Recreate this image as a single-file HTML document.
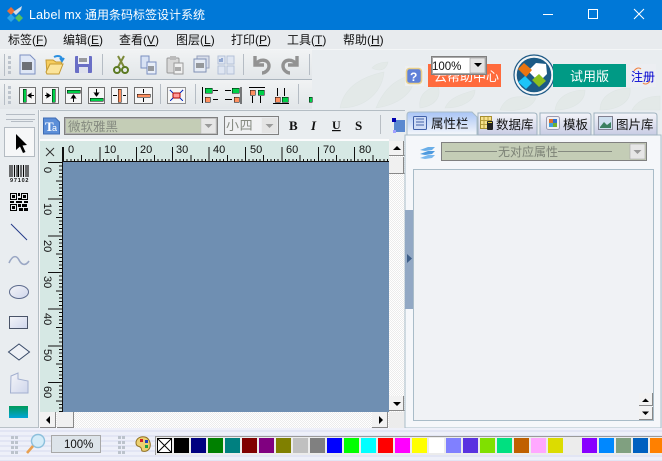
<!DOCTYPE html>
<html><head><meta charset="utf-8"><style>
html,body{margin:0;padding:0;background:#e9edf0;overflow:hidden}
svg{display:block}
text{font-family:"Liberation Sans","Noto Sans CJK SC",sans-serif;font-size:12px;fill:#111}
.c{font-family:"Noto Sans CJK SC","Liberation Sans",sans-serif}
.b{fill:#f6f6f6;stroke:#707070;stroke-width:1}
</style></head><body>
<svg width="662" height="461" viewBox="0 0 662 461" xmlns="http://www.w3.org/2000/svg">
<defs>
<linearGradient id="tb" x1="0" y1="0" x2="0" y2="1"><stop offset="0" stop-color="#f1f3f4"/><stop offset="1" stop-color="#e2e6e9"/></linearGradient>
<linearGradient id="tabA" x1="0" y1="0" x2="0" y2="1"><stop offset="0" stop-color="#a9c5f5"/><stop offset="1" stop-color="#f5f7fb"/></linearGradient>
<linearGradient id="tabB" x1="0" y1="0" x2="0" y2="1"><stop offset="0" stop-color="#f4f5fa"/><stop offset="1" stop-color="#c8cce4"/></linearGradient>
<linearGradient id="gr" x1="0" y1="0" x2="0" y2="1"><stop offset="0" stop-color="#009a5a"/><stop offset="1" stop-color="#00a5d8"/></linearGradient>
<linearGradient id="shp" x1="0" y1="0" x2="1" y2="1"><stop offset="0" stop-color="#f4f5f8"/><stop offset="1" stop-color="#cfd6ec"/></linearGradient>
<pattern id="stripe" patternUnits="userSpaceOnUse" width="4" height="5"><rect width="4" height="5" fill="#eef0f9"/><rect y="0" width="4" height="2" fill="#e2e5f4"/></pattern>
<pattern id="dith" patternUnits="userSpaceOnUse" width="2" height="2"><rect width="2" height="2" fill="#fff"/><rect width="1" height="1" fill="#ececec"/><rect x="1" y="1" width="1" height="1" fill="#ececec"/></pattern>
<g id="ht"><path shape-rendering="crispEdges" stroke="#111" fill="none" d="M0.5 -15V0M4 -3V0M7.8 -3V0M11.4 -3V0M15 -3V0M18.7 -7V0M22.3 -3V0M26 -3V0M29.6 -3V0M33.2 -3V0"/></g>
<g id="vt"><path shape-rendering="crispEdges" stroke="#111" fill="none" d="M-15 0.5H0M-4 4H0M-4 7.8H0M-4 11.4H0M-4 15H0M-7 18.8H0M-4 22.4H0M-4 26H0M-4 29.6H0M-4 33.3H0"/></g>
<clipPath id="hc"><rect x="63" y="141" width="326" height="22"/></clipPath>
<clipPath id="vc"><rect x="40" y="162" width="23" height="250"/></clipPath>
<g id="grip"><path fill="#bcc3cc" d="M0 0h3v3h-3zM0 5h3v3h-3zM0 10h3v3h-3zM0 15h3v3h-3z"/></g>
</defs>

<!-- base -->
<rect width="662" height="461" fill="#e9edf0"/>

<!-- leaf texture -->
<g fill="#e3e9e8" stroke="#dee5e4" stroke-width=".6">
<path d="M340 108c4-22 24-32 44-36-2 20-18 36-44 36z"/>
<path d="M376 108c10-24 24-30 38-34 2 16-12 30-38 34z"/>
<path d="M420 108c-2-14 8-20 18-22 4 12-4 20-18 22z"/>
<path d="M445 108c4-10 16-14 30-18 0 10-12 18-30 18z"/>
<path d="M500 110c6-16 20-14 36-12-4 10-16 14-36 12z"/>
<path d="M555 110c2-14 16-20 30-20 0 12-12 20-30 20z"/>
<path d="M600 110c0-14 14-22 30-22 2 14-12 22-30 22z"/>
<path d="M632 110c4-8 14-14 28-14v14z"/>
<path d="M372 68c3-4 10-6 16-6-2 8-8 10-16 6z"/>
</g>

<!-- title bar -->
<rect width="662" height="30" fill="#0078d7"/>
<g>
<path d="M11 7l4 4-4 4-4-4z" fill="#e8703a"/><path d="M11 14l4 4-4 4-4-4z" fill="#2aa4e8"/>
<path d="M19 14l4 4-4 4-4-4z" fill="#55c060"/><path d="M13 12l9-6 -1 4-5 5z" fill="#d5dde8"/>
</g>
<text x="29" y="19" style="fill:#fff;font-size:12.5px;letter-spacing:.2px">Label mx</text>
<text x="85" y="19" class="c" style="fill:#fff;font-size:12px">通用条码标签设计系统</text>
<g stroke="#fff" fill="none" shape-rendering="crispEdges">
<path d="M543 14.5h10"/><rect x="588.5" y="9.5" width="9" height="9"/>
</g>
<path d="M634 9l10 10M644 9l-10 10" stroke="#fff" fill="none"/>

<!-- menu -->
<rect y="30" width="662" height="20" fill="#e8ebee"/>
<rect y="49" width="662" height="1" fill="#f4f6f7"/>
<g class="c">
<text x="8" y="44">标签(<tspan text-decoration="underline">F</tspan>)</text>
<text x="63" y="44">编辑(<tspan text-decoration="underline">E</tspan>)</text>
<text x="119" y="44">查看(<tspan text-decoration="underline">V</tspan>)</text>
<text x="176" y="44">图层(<tspan text-decoration="underline">L</tspan>)</text>
<text x="231" y="44">打印(<tspan text-decoration="underline">P</tspan>)</text>
<text x="287" y="44">工具(<tspan text-decoration="underline">T</tspan>)</text>
<text x="343" y="44">帮助(<tspan text-decoration="underline">H</tspan>)</text>
</g>

<!-- toolbar rows -->
<rect y="50" width="312" height="29" fill="url(#tb)"/>
<rect y="79" width="312" height="1" fill="#aab4bd"/>
<rect y="80" width="312" height="29" fill="url(#tb)"/>
<use href="#grip" x="8" y="56"/><use href="#grip" x="8" y="86"/>
<g fill="#b5bcc4" shape-rendering="crispEdges">
<rect x="4" y="54" width="1" height="22"/><rect x="102" y="54" width="1" height="21"/><rect x="243" y="54" width="1" height="21"/><rect x="309" y="54" width="1" height="21"/>
<rect x="4" y="84" width="1" height="21"/><rect x="160" y="84" width="1" height="20"/><rect x="195" y="84" width="1" height="20"/><rect x="298" y="84" width="1" height="20"/>
</g>

<!-- row 1 icons -->
<path d="M20 55h10l5 5v14H20z" fill="#dfe7f6" stroke="#7d90c2"/><path d="M23 62v8M25 62v8M27 62v8M29 62v8M31 62v8" stroke="#222" stroke-width="1.2"/>
<path d="M46 60h7l3 2h6l-4 12H47z" fill="#f6cd5e" stroke="#c59a32"/><path d="M46 72l4-8h13l-4 10H47z" fill="#fbe49a" stroke="#c59a32"/><path d="M54 57c4-2 8-1 8 3M60 58l2 3 2-3" stroke="#2a8fe0" stroke-width="2" fill="none"/>
<rect x="75" y="56" width="17" height="17" rx="1" fill="#6a6fc6"/><rect x="78" y="56" width="11" height="8" fill="#eef0f6"/><rect x="79" y="67" width="9" height="6" fill="#dfe2ee"/><path d="M80 58v4M82 58v4M84 58v4M86 58v4" stroke="#444"/>
<path d="M118 56l6 11M124 56l-6 11" stroke="#7c8a3a" stroke-width="2"/><circle cx="117" cy="70" r="3" fill="none" stroke="#5b7a22" stroke-width="2"/><circle cx="125" cy="70" r="3" fill="none" stroke="#5b7a22" stroke-width="2"/>
<path d="M141 56h8v12h-8z" fill="#d8e2f4" stroke="#7a8fc0"/><path d="M147 62h9v12h-9z" fill="#e8eef8" stroke="#7a8fc0"/><path d="M149 66v5M151 66v5M153 66v5" stroke="#444"/>
<rect x="167" y="58" width="12" height="15" rx="1" fill="#d8d8d8" stroke="#999"/><rect x="170" y="56" width="6" height="4" fill="#bbb"/><path d="M174 63h9v11h-9z" fill="#f0f0f0" stroke="#999"/><path d="M176 67v4M178 67v4M180 67v4" stroke="#666"/>
<path d="M197 56h12v12h-12z" fill="#d8deea" stroke="#99a3bd"/><path d="M194 59h12v13h-12z" fill="#e6ebf4" stroke="#8090b4"/><path d="M197 63v5M199 63v5M201 63v5M203 63v5" stroke="#444"/>
<g fill="#dfe6f2" stroke="#b4c1d8"><rect x="218" y="56" width="7" height="8"/><rect x="227" y="56" width="7" height="8"/><rect x="218" y="66" width="7" height="8"/><rect x="227" y="66" width="7" height="8"/></g><path d="M220 59v3M222 58v4" stroke="#446ab0"/>
<path d="M255 56v9h9M255 65c4-7 14-6 14 1 0 4-4 7-7 7" stroke="#929292" stroke-width="3.4" fill="none"/>
<path d="M297 56v9h-9M297 65c-4-7-14-6-14 1 0 4 4 7 7 7" stroke="#929292" stroke-width="3.4" fill="none"/>

<!-- row 2 align icons -->
<g shape-rendering="crispEdges">
<rect class="b" x="19.5" y="87.5" width="16" height="16"/><rect x="23" y="89" width="3" height="13" fill="#00d048" stroke="#000" stroke-width=".5"/><path d="M28 95.5h6M28 95.5l3-2v4z" stroke="#000" fill="#000"/>
<rect class="b" x="42.5" y="87.5" width="16" height="16"/><rect x="52" y="89" width="3" height="13" fill="#00d048" stroke="#000" stroke-width=".5"/><path d="M45 95.5h6M50 95.5l-3-2v4z" stroke="#000" fill="#000"/>
<rect class="b" x="65.5" y="87.5" width="16" height="16"/><rect x="67" y="90" width="13" height="3" fill="#00d048" stroke="#000" stroke-width=".5"/><path d="M73.5 95v7M73.5 95l-2 3h4z" stroke="#000" fill="#000"/>
<rect class="b" x="88.5" y="87.5" width="16" height="16"/><rect x="90" y="98" width="13" height="3" fill="#00d048" stroke="#000" stroke-width=".5"/><path d="M96.5 89v7M96.5 96l-2-3h4z" stroke="#000" fill="#000"/>
<rect class="b" x="111.5" y="87.5" width="16" height="16"/><rect x="118" y="89" width="3" height="13" fill="#ff9060" stroke="#000" stroke-width=".5"/><path d="M113 95.5h4M123 95.5h3" stroke="#000"/>
<rect class="b" x="134.5" y="87.5" width="18" height="16"/><rect x="137" y="94" width="13" height="3" fill="#ff9060" stroke="#000" stroke-width=".5"/><path d="M143.5 89v4M143.5 98v4" stroke="#000"/>
<rect x="167.5" y="87.5" width="18" height="16" fill="#f6f6f6" stroke="#333" stroke-dasharray="1 1"/><rect x="173" y="93" width="7" height="5" fill="#ff9a9a" stroke="#a00"/><path d="M170 90l3 3M183 90l-3 3M170 101l3-3M183 101l-3-3" stroke="#1030c0" stroke-width="1.4"/>
<path d="M202.5 87v16" stroke="#000"/><rect x="205" y="88" width="7" height="5" fill="#00d048" stroke="#000" stroke-width=".5"/><rect x="205" y="97" width="5" height="5" fill="#ff9060" stroke="#000" stroke-width=".5"/><path d="M213 90.5h5M213 99.5h5" stroke="#000"/>
<rect x="232" y="88" width="7" height="5" fill="#00d048" stroke="#000" stroke-width=".5"/><rect x="234" y="97" width="5" height="5" fill="#ff9060" stroke="#000" stroke-width=".5"/><path d="M225 90.5h6M225 99.5h7M241 87v17" stroke="#000"/>
<path d="M249 87.5h16" stroke="#000"/><rect x="250" y="90" width="5" height="5" fill="#ff9060" stroke="#000" stroke-width=".5"/><rect x="258" y="90" width="6" height="5" fill="#00d048" stroke="#000" stroke-width=".5"/><path d="M252.5 96v7M260.5 96v7" stroke="#000"/>
<path d="M273 103.5h16" stroke="#000"/><rect x="275" y="97" width="5" height="5" fill="#ff9060" stroke="#000" stroke-width=".5"/><rect x="282" y="97" width="6" height="5" fill="#00d048" stroke="#000" stroke-width=".5"/><path d="M277.5 88v8M284.5 88v8" stroke="#000"/>
<rect x="309" y="97" width="3" height="5" fill="#00d048" stroke="#000" stroke-width=".5"/>
</g>

<!-- right toolbar controls -->
<rect x="405" y="66" width="19" height="20" fill="#eef0f1"/>
<rect x="406.5" y="68.5" width="15" height="15" rx="3" fill="#5f80d8" stroke="#e8cf8a" stroke-width="1.6"/>
<text x="410" y="81" style="fill:#fff;font-size:12px;font-weight:bold">?</text>
<rect x="428" y="64" width="73" height="23" fill="#ff6b3d"/>
<text x="434" y="81" class="c" style="fill:#fff;font-size:13px">云帮助中心</text>
<rect x="431" y="56" width="56" height="19" fill="#fff"/>
<rect x="431.5" y="56.5" width="55" height="18" fill="none" stroke="#808080" stroke-width="1"/>
<rect x="432.5" y="57.5" width="53" height="16" fill="none" stroke="#aaa" stroke-width="1"/>
<text x="432" y="70" style="font-size:11.5px">100%</text>
<rect x="470" y="58" width="15" height="15" fill="#e4e4e4" stroke="#999" stroke-width=".6"/>
<path d="M474 63h8l-4 4z" fill="#000"/>
<circle cx="534" cy="75" r="20" fill="#f2f5f7" stroke="#1e5a86" stroke-width="1.2"/>
<circle cx="534" cy="75" r="17.3" fill="#1c5a85"/>
<path d="M528 71l8-8 10 1 1 10-8 8z" fill="#fff"/>
<path d="M524 64l8 7-6 7-8-8z" fill="#ea7410" transform="translate(0,-1)"/>
<path d="M525 76l7 7-6 6-8-7z" fill="#1cc4f8"/>
<path d="M538 77l7 7-7 6-7-7z" fill="#8cc01e" transform="translate(1,-3)"/>
<rect x="553" y="64" width="73" height="23" fill="#009a85"/>
<text x="570" y="81" class="c" style="fill:#fff;font-size:13px">试用版</text>
<rect x="630" y="64" width="26" height="23" fill="#eceef2"/>
<text x="631" y="81" class="c" style="fill:#0000d0;font-size:12px">注册</text>
<path d="M634 71c2-3 5-4 7-2M643 83c2 2 5 1 7-2" stroke="#f08040" fill="none"/>

<!-- left tool panel -->
<rect y="110" width="38" height="318" fill="#e9edf0"/>
<rect x="0" y="427" width="38" height="1" fill="#b9c2c8"/>
<rect x="38" y="110" width="1" height="318" fill="#b4bdc4"/>
<rect x="39" y="110" width="1" height="318" fill="#f6f7f8"/>
<path d="M6 114.5h29M6 119.5h29M11 121.5h22" stroke="#b5bcc4" fill="none" shape-rendering="crispEdges"/>
<rect x="4.5" y="127.5" width="30" height="29" fill="#f6f7f8" stroke="#b4bbc2"/>
<path d="M16 134v16l4-3.500 3 6.500 2.500-1-3-6.500 4.500-.5z" fill="#000"/>
<path d="M10 165v12M12 165v12M14.500 165v12M17 165v12M18.500 165v12M21 165v12M23.500 165v12M26 165v12M28 165v12" stroke="#000" stroke-width="1.1"/>
<text x="10" y="182" style="font-size:5.5px;font-weight:bold;letter-spacing:.8px">97102</text>
<g fill="#000" shape-rendering="crispEdges">
<path fill-rule="evenodd" d="M10 193h7v7h-7zM11 194v5h5v-5zM12 195h3v3h-3z"/>
<path fill-rule="evenodd" d="M21 193h7v7h-7zM22 194v5h5v-5zM23 195h3v3h-3z"/>
<path fill-rule="evenodd" d="M10 204h7v7h-7zM11 205v5h5v-5zM12 206h3v3h-3z"/>
<path d="M18 193h2v3h-2zM18 198h3v2h-3zM10 201h4v2h-4zM16 201h6v2h-6zM24 201h4v2h-4zM18 204h3v3h-3zM22 204h5v3h-5zM19 208h4v3h-4zM24 208h4v3h-4z"/>
</g>
<path d="M11 224l16 16" stroke="#223a88" fill="none"/>
<path d="M9 263c4-9 8-7 10-3s6 7 10 1" stroke="#9aa7c4" stroke-width="1.6" fill="none"/>
<ellipse cx="19" cy="292" rx="9.500" ry="6.500" fill="url(#shp)" stroke="#5c6a8c"/>
<rect x="9.500" y="316.500" width="18" height="12" fill="url(#shp)" stroke="#4a5468"/>
<path d="M19 344l10.500 8-10.500 8-10.500-8z" fill="#eef1f6" stroke="#384a68"/>
<path d="M11 376l7-3v6l10 2v12H10.500z" fill="url(#shp)" stroke="#a2afcf"/>
<rect x="9" y="406" width="19" height="12" fill="url(#gr)"/>

<!-- font toolbar -->
<rect x="40" y="110" width="365" height="1" fill="#b4bdc4"/>
<rect x="40" y="111" width="365" height="28" fill="#e9edf0"/>
<rect x="40" y="139" width="349" height="2" fill="#fbfbfc"/>
<path d="M43.500 118h12l4 4v12h-16z" fill="#5b8ed8" stroke="#3e6cb4"/>
<text x="45" y="131" style="fill:#fff;font-family:'Liberation Serif',serif;font-size:13px;font-weight:bold">T</text>
<text x="52" y="131" style="fill:#fff;font-size:9px">a</text>
<rect x="64.500" y="117.500" width="153" height="17" fill="#c4cdb6" stroke="#808080"/>
<rect x="65.500" y="118.500" width="151" height="15" fill="none" stroke="#b0b0b0"/>
<text x="68" y="131" class="c" style="fill:#858a80;font-size:12.500px">微软雅黑</text>
<rect x="201" y="118.500" width="15" height="15" fill="#e6e6e6" stroke="#bbb" stroke-width=".5"/>
<path d="M204.500 124h8l-4 4z" fill="#9b9b9b"/>
<rect x="224.500" y="116.500" width="54" height="18" fill="#e9ebee" stroke="#808080"/>
<rect x="225.500" y="117.500" width="36" height="16" fill="#f0f1f3"/>
<text x="226" y="130" class="c" style="fill:#858a80;font-size:13px;letter-spacing:.6px">小四</text>
<rect x="262" y="118" width="15" height="15" fill="#e4e4e4"/>
<path d="M265.500 124h8l-4 4z" fill="#9b9b9b"/>
<text x="289" y="130" style="font-family:'Liberation Serif',serif;font-weight:bold;font-size:13px">B</text>
<text x="311" y="130" style="font-family:'Liberation Serif',serif;font-weight:bold;font-style:italic;font-size:13px">I</text>
<text x="332" y="129" style="font-family:'Liberation Serif',serif;font-weight:bold;font-size:12px;text-decoration:underline">U</text>
<text x="355" y="130" style="font-family:'Liberation Serif',serif;font-weight:bold;font-size:13px">S</text>
<rect x="380" y="115" width="1" height="19" fill="#b8bec4"/>
<rect x="394" y="120" width="11" height="12" fill="#5a88d0"/><rect x="392" y="118" width="4" height="4" fill="#0000b0"/><rect x="393" y="130" width="3" height="3" fill="#a0a0ff"/>

<!-- ruler & canvas -->
<rect x="40" y="141" width="349" height="271" fill="#d6e8e4"/>
<rect x="63" y="162" width="326" height="250" fill="#6f8fb2"/>
<path d="M63 161.500H389M48 162.500H63M62.500 147V412" stroke="#111" fill="none" shape-rendering="crispEdges"/>
<path d="M46 148l8 8M54 148l-8 8" stroke="#333" fill="none"/>
<g clip-path="url(#hc)">
<use href="#ht" x="63" y="162"/><use href="#ht" x="99.400" y="162"/><use href="#ht" x="135.800" y="162"/><use href="#ht" x="172.200" y="162"/><use href="#ht" x="208.600" y="162"/><use href="#ht" x="245" y="162"/><use href="#ht" x="281.400" y="162"/><use href="#ht" x="317.800" y="162"/><use href="#ht" x="354.200" y="162"/>
</g>
<g style="font-size:11px">
<text x="68" y="153" style="font-size:11px">0</text><text x="104" y="153" style="font-size:11px">10</text><text x="140" y="153" style="font-size:11px">20</text><text x="176" y="153" style="font-size:11px">30</text><text x="213" y="153" style="font-size:11px">40</text><text x="250" y="153" style="font-size:11px">50</text><text x="286" y="153" style="font-size:11px">60</text><text x="323" y="153" style="font-size:11px">70</text><text x="359" y="153" style="font-size:11px">80</text>
</g>
<g clip-path="url(#vc)">
<use href="#vt" x="63" y="162"/><use href="#vt" x="63" y="198.700"/><use href="#vt" x="63" y="235.300"/><use href="#vt" x="63" y="272"/><use href="#vt" x="63" y="308.600"/><use href="#vt" x="63" y="345.300"/><use href="#vt" x="63" y="382"/>
</g>
<text transform="translate(44,167) rotate(90)" style="font-size:11px">0</text>
<text transform="translate(44,203) rotate(90)" style="font-size:11px">10</text>
<text transform="translate(44,240) rotate(90)" style="font-size:11px">20</text>
<text transform="translate(44,276) rotate(90)" style="font-size:11px">30</text>
<text transform="translate(44,313) rotate(90)" style="font-size:11px">40</text>
<text transform="translate(44,349) rotate(90)" style="font-size:11px">50</text>
<text transform="translate(44,386) rotate(90)" style="font-size:11px">60</text>

<!-- scrollbars -->
<rect x="389" y="141" width="16" height="271" fill="url(#dith)"/>
<rect x="40" y="412" width="349" height="16" fill="url(#dith)"/>
<rect x="389" y="412" width="16" height="16" fill="#ececec"/>
<g shape-rendering="crispEdges">
<rect x="389" y="141" width="15" height="15" fill="#f2f2f2"/><path d="M389 155.500h15.500M403.500 141v15" stroke="#888"/>
<rect x="389" y="157" width="15" height="17" fill="#f0f0f0"/><path d="M389 173.500h15.500M403.500 157v17" stroke="#888"/>
<rect x="389" y="396" width="15" height="15" fill="#f2f2f2"/><path d="M389 410.500h15.500M403.500 396v15" stroke="#888"/>
<rect x="40" y="412" width="16" height="15" fill="#f2f2f2"/><path d="M40 427.500h16M55.500 412v16" stroke="#888"/>
<rect x="57" y="412" width="17" height="15" fill="#f0f0f0"/><path d="M57 427.500h17M73.500 412v16" stroke="#888"/>
<rect x="372" y="412" width="16" height="15" fill="#f2f2f2"/><path d="M372 427.500h16M387.500 412v16" stroke="#888"/>
</g>
<path d="M393 150h8l-4-4zM393 402h8l-4 4z" fill="#000"/>
<path d="M50 416v8l-4-4zM379 416v8l4-4z" fill="#000"/>

<!-- right panel -->
<rect x="405" y="135" width="256" height="293" fill="#f5f7fa" stroke="#a9bcc8"/>
<path d="M407 135v-20q0-3 3-3h62l5 5v18z" fill="url(#tabA)" stroke="#a9bcc8"/>
<path d="M478 135v-22h56q3 0 3 3v19z" fill="url(#tabB)" stroke="#9fb2bf"/>
<path d="M540 135v-22h48q3 0 3 3v19z" fill="url(#tabB)" stroke="#9fb2bf"/>
<path d="M594 135v-22h60q3 0 3 3v19z" fill="url(#tabB)" stroke="#9fb2bf"/>
<rect x="413.500" y="116.500" width="13" height="13" rx="1" fill="#cfdcf5" stroke="#4060a8"/>
<path d="M416 119h8M416 122h8M416 125h8" stroke="#4060a8"/>
<text x="431" y="128" class="c" style="font-size:12.500px">属性栏</text>
<rect x="480.500" y="116.500" width="11" height="12" fill="#f8e28c" stroke="#a89030"/>
<path d="M484 117v11M488 117v11M481 120.500h10M481 124.500h10" stroke="#b8a040"/>
<rect x="487" y="121" width="6" height="9" rx="1" fill="#222"/><rect x="488" y="122" width="4" height="1" fill="#e0d040"/>
<text x="496" y="129" class="c" style="font-size:12.500px">数据库</text>
<rect x="546.500" y="116.500" width="13" height="13" rx="2" fill="#f0f0f4" stroke="#9a9ab0"/>
<rect x="549" y="119" width="4" height="4" fill="#e07030"/><rect x="553" y="119" width="4" height="4" fill="#3070d0"/><rect x="549" y="123" width="4" height="4" fill="#40a0e0"/><rect x="553" y="123" width="4" height="4" fill="#70b030"/>
<text x="563" y="129" class="c" style="font-size:12.500px">模板</text>
<rect x="598.500" y="116.500" width="14" height="13" fill="#cfe0f0" stroke="#808090"/>
<path d="M600 127l4-5 3 3 4-3v6h-11z" fill="#3a8060"/>
<text x="616" y="129" class="c" style="font-size:12.500px">图片库</text>

<path d="M420 150l8-3h7l-3 3-7 1z" fill="#6aaee8"/><path d="M420 154l8-3h7l-3 3-7 1z" fill="#4f9ade"/><path d="M420 158l8-3h7l-3 3-7 1z" fill="#7ab8ee"/>
<rect x="441.500" y="142.500" width="205" height="18" fill="#c4cdb6" stroke="#808080"/>
<text x="498" y="156" class="c" style="fill:#7c8276;font-size:12px">无对应属性</text>
<path d="M445 151.500h52M558 151.500h54" stroke="#858a80" fill="none"/>
<rect x="630" y="144" width="15" height="15" fill="#e6e6e6" stroke="#aaa" stroke-width=".6"/>
<path d="M633.500 150h8l-4 4z" fill="#999"/>
<rect x="413.500" y="169.500" width="240" height="251" fill="#f0f2f5" stroke="#a9bcc8"/>
<g shape-rendering="crispEdges">
<rect x="639" y="393" width="14" height="13" fill="#f2f2f2"/><path d="M639 405.500h14M652.500 393v13" stroke="#888"/>
<rect x="639" y="407" width="14" height="13" fill="#f2f2f2"/><path d="M639 419.500h14M652.500 407v13" stroke="#888"/>
</g>
<path d="M642 402h7l-3.500-3.500zM642 411.500h7l-3.500 3.500z" fill="#000"/>
<rect x="405" y="210" width="8" height="99" fill="#92a8c4"/>
<path d="M407 254v9l5-4.500z" fill="#3e5e88"/>

<!-- status bar -->
<rect y="428" width="662" height="33" fill="url(#stripe)"/>
<use href="#grip" x="11" y="436"/><use href="#grip" x="15" y="436"/>
<use href="#grip" x="118" y="436"/><use href="#grip" x="122" y="436"/>
<circle cx="38" cy="441" r="6.500" fill="#d4ecf8" stroke="#8cc0dc" stroke-width="1.400"/>
<path d="M33 446l-6 7" stroke="#e8a050" stroke-width="2.600"/>
<rect x="51.500" y="435.500" width="49" height="17" fill="#dde4ea" stroke="#a8a8a8"/>
<text x="64" y="448" style="font-size:11.500px">100%</text>
<path d="M136 443c0-5 5-7 9-6s6 6 5 10-5 5-8 4c-1-2 0-3-2-4s-4-1-4-4z" fill="#ecd070" stroke="#907020"/>
<rect x="140" y="439" width="3" height="3" fill="#d02020"/><rect x="145" y="440" width="3" height="3" fill="#2040c0"/><rect x="145" y="445" width="3" height="3" fill="#20a040"/>
<rect x="155" y="436" width="507" height="19" fill="#ececec"/>
<path d="M155 436.500H662M155.500 436v19" stroke="#9a9a9a" fill="none" shape-rendering="crispEdges"/>
<g shape-rendering="crispEdges">
<rect x="157.500" y="438.500" width="14" height="14" fill="#fff" stroke="#000"/>
<rect x="174" y="438" width="15" height="15" fill="#000"/>
<rect x="191" y="438" width="15" height="15" fill="#000080"/>
<rect x="208" y="438" width="15" height="15" fill="#008000"/>
<rect x="225" y="438" width="15" height="15" fill="#008080"/>
<rect x="242" y="438" width="15" height="15" fill="#800000"/>
<rect x="259" y="438" width="15" height="15" fill="#800080"/>
<rect x="276" y="438" width="15" height="15" fill="#808000"/>
<rect x="293" y="438" width="15" height="15" fill="#c0c0c0"/>
<rect x="310" y="438" width="15" height="15" fill="#808080"/>
<rect x="327" y="438" width="15" height="15" fill="#0000ff"/>
<rect x="344" y="438" width="15" height="15" fill="#00ff00"/>
<rect x="361" y="438" width="15" height="15" fill="#00ffff"/>
<rect x="378" y="438" width="15" height="15" fill="#ff0000"/>
<rect x="395" y="438" width="15" height="15" fill="#ff00ff"/>
<rect x="412" y="438" width="15" height="15" fill="#ffff00"/>
<rect x="429" y="438" width="15" height="15" fill="#ffffff"/>
<rect x="446" y="438" width="15" height="15" fill="#8080ff"/>
<rect x="463" y="438" width="15" height="15" fill="#5a32e0"/>
<rect x="480" y="438" width="15" height="15" fill="#80e000"/>
<rect x="497" y="438" width="15" height="15" fill="#00e080"/>
<rect x="514" y="438" width="15" height="15" fill="#c06000"/>
<rect x="531" y="438" width="15" height="15" fill="#ffa8ff"/>
<rect x="548" y="438" width="15" height="15" fill="#dcdc00"/>
<rect x="565" y="438" width="15" height="15" fill="#ececec"/>
<rect x="582" y="438" width="15" height="15" fill="#8800ff"/>
<rect x="599" y="438" width="15" height="15" fill="#0088ff"/>
<rect x="616" y="438" width="15" height="15" fill="#80a080"/>
<rect x="633" y="438" width="15" height="15" fill="#0060c0"/>
<rect x="650" y="438" width="12" height="15" fill="#ff8000"/>
</g>
<path d="M158 439l13 13M171 439l-13 13" stroke="#000" fill="none"/>
</svg>
</body></html>
